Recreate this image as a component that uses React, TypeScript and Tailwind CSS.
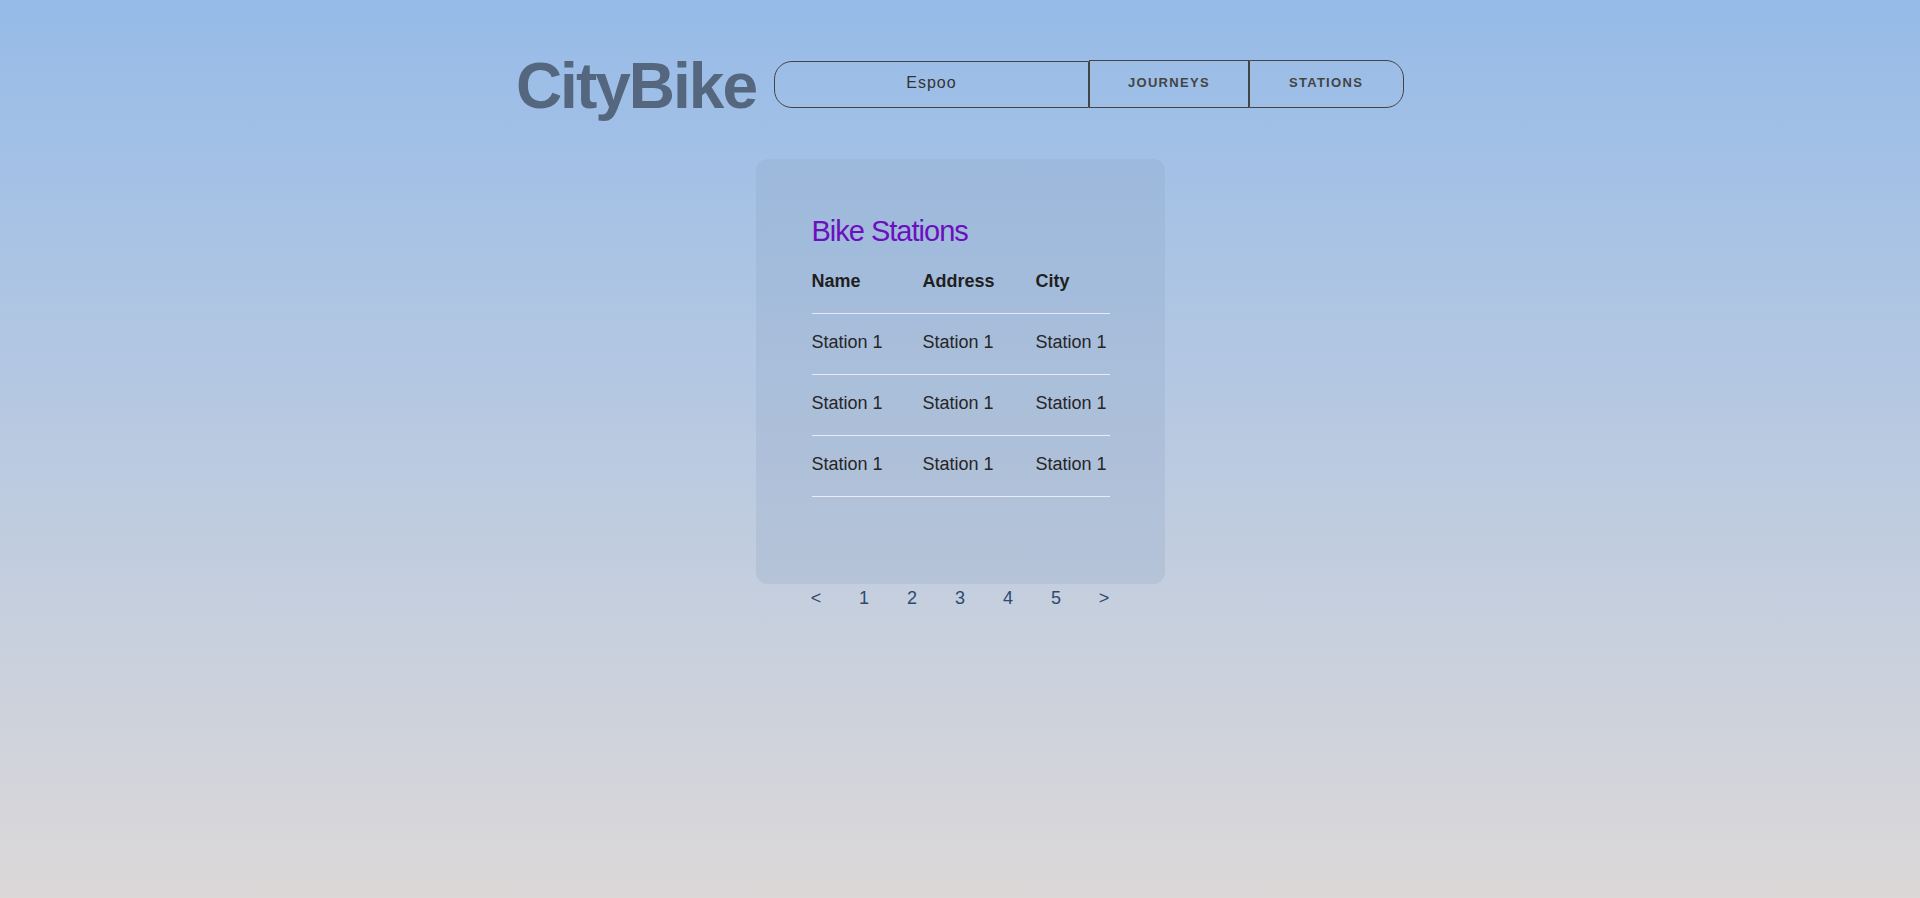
import React from "react";

const stations = [
  { name: "Station 1", address: "Station 1", city: "Station 1" },
  { name: "Station 1", address: "Station 1", city: "Station 1" },
  { name: "Station 1", address: "Station 1", city: "Station 1" },
];

const pages = ["<", "1", "2", "3", "4", "5", ">"];

function Header() {
  return (
    <header className="flex items-start justify-center gap-[18px] pt-[54px]">
      {/* Logo */}
      <h1 className="text-[64px] leading-none font-bold tracking-[-2px] text-[#55677f]">
        CityBike
      </h1>

      {/* City picker + nav */}
      <nav className="flex items-start mt-[6px]">
        <input
          defaultValue="Espoo"
          readOnly
          className="w-[315px] h-[47px] mt-px pb-[4px] border border-[#444] rounded-l-[18px] bg-transparent text-center text-[16px] tracking-[1px] text-[#333] outline-none"
        />
        <button className="h-[48px] px-[38px] pb-[2px] border border-[#444] text-[13px] font-bold tracking-[0.1em] text-[#444]">
          JOURNEYS
        </button>
        <button className="h-[48px] pl-[39px] pr-[40px] pb-[2px] border border-[#444] rounded-r-[18px] text-[13px] font-bold tracking-[0.1em] text-[#444]">
          STATIONS
        </button>
      </nav>
    </header>
  );
}

function StationTable() {
  return (
    <div className="w-[409px] rounded-xl bg-[#8ca5c3]/25 pl-[56px] pr-[55px] pt-[55px] pb-[87px]">
      <h2 className="text-[29px] leading-[35px] tracking-[-1px] text-[#6a10bd]">Bike Stations</h2>

      <div className="mt-[4px]">
        <div className="grid grid-cols-[111px_113px_1fr] h-[61px] pt-[16px] border-b border-white/70 text-[18px] leading-[24px] font-bold text-[#1f1f1f]">
          <span>Name</span>
          <span>Address</span>
          <span>City</span>
        </div>
        {stations.map((s, i) => (
          <div
            key={i}
            className="grid grid-cols-[111px_113px_1fr] h-[61px] pt-[16px] border-b border-white/70 text-[18px] leading-[24px] text-[#262626]"
          >
            <span>{s.name}</span>
            <span>{s.address}</span>
            <span>{s.city}</span>
          </div>
        ))}
      </div>
    </div>
  );
}

export default function App() {
  return (
    <div className="h-[898px] bg-gradient-to-b from-[#96bbe8] to-[#dcd8d8] font-['Liberation_Sans',Arial,sans-serif]">
      <Header />

      <main className="flex flex-col items-center mt-[41px]">
        <StationTable />

        {/* Pagination */}
        <div className="flex mt-[2px]">
          {pages.map((p, i) => (
            <button key={i} className="w-[48px] text-center text-[18px] leading-[24px] text-[#2b4a6e]">
              {p}
            </button>
          ))}
        </div>
      </main>
    </div>
  );
}
